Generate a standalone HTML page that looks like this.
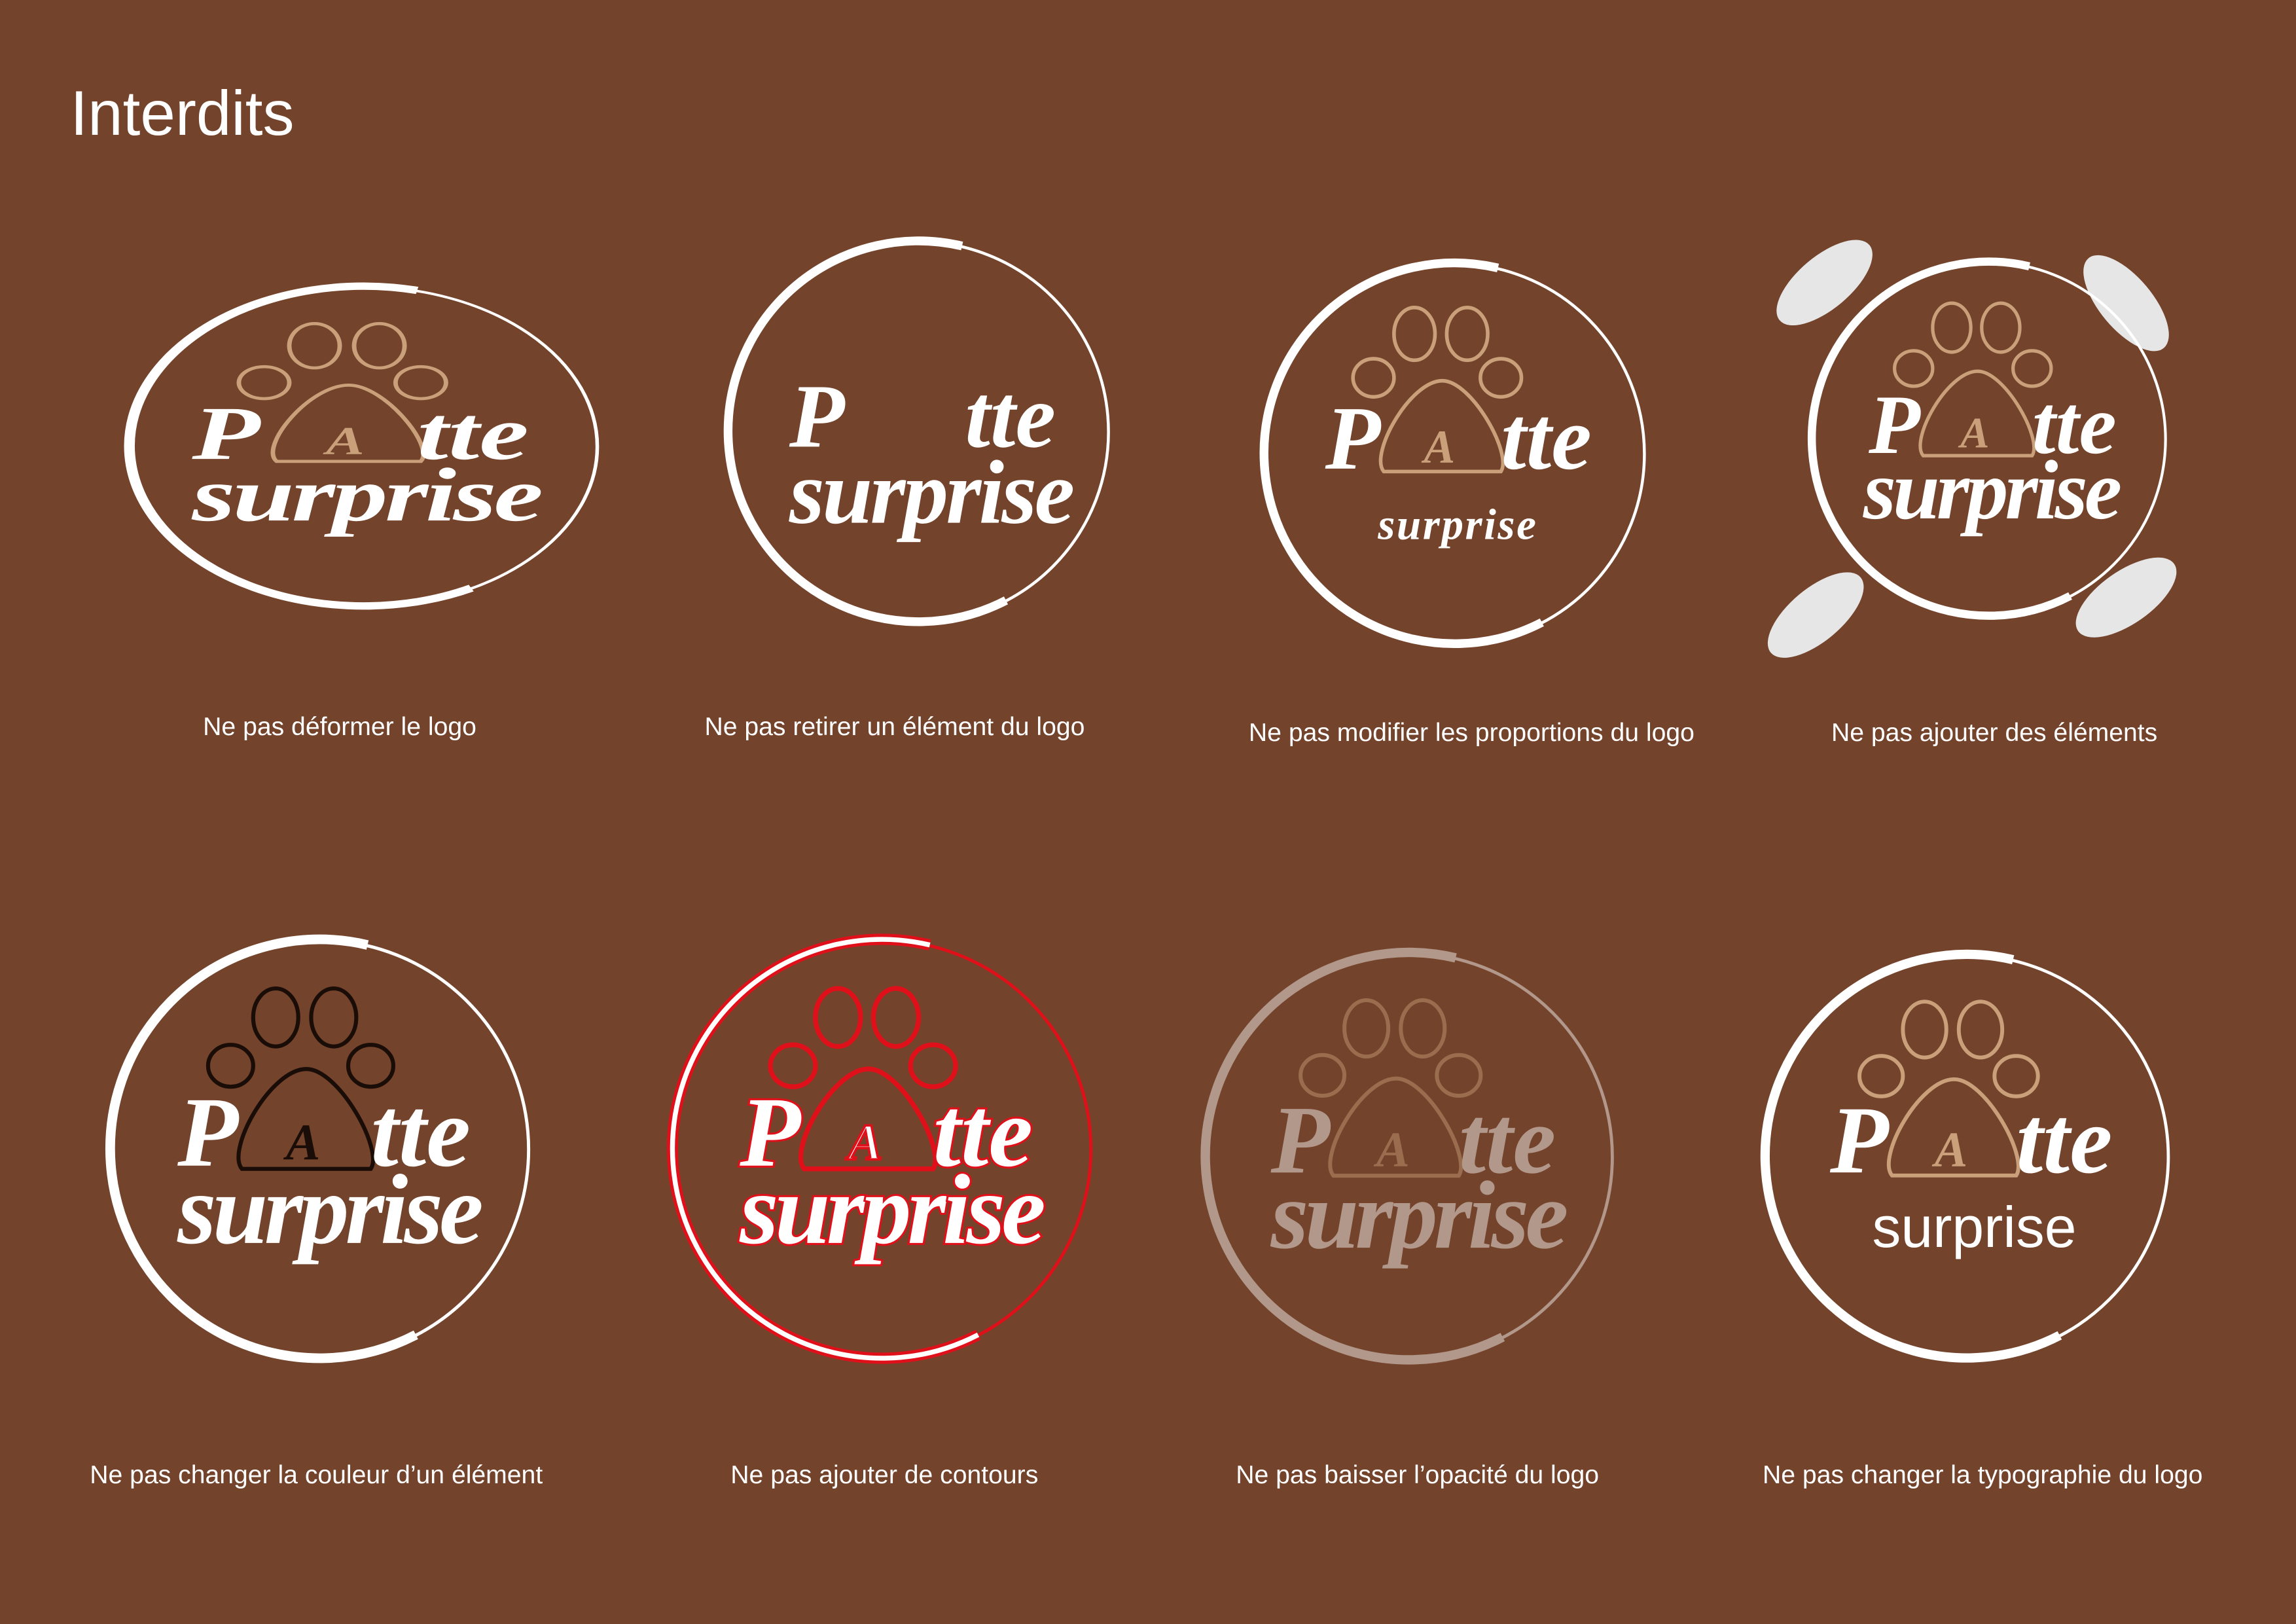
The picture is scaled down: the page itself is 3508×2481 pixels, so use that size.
<!DOCTYPE html>
<html><head><meta charset="utf-8"><style>
html,body{margin:0;padding:0;background:#74432b;}
svg{display:block}
.cap{font-family:"Liberation Sans",sans-serif;font-size:17.5px;fill:#fff;text-anchor:middle}
.lt{font-family:"Liberation Serif",serif;font-weight:bold;font-style:italic}
</style></head><body>
<svg width="3508" height="2481" viewBox="0 0 1568 1109" preserveAspectRatio="none" xmlns="http://www.w3.org/2000/svg">
<rect width="1568" height="1109" fill="#74432b"/>
<text x="48" y="92" font-family="Liberation Sans,sans-serif" font-size="43" fill="#fff">Interdits</text>

<!-- 1 deformed -->
<g transform="translate(248,305) scale(1.23,0.84)">
 <circle r="130" fill="none" stroke="#fff" stroke-width="2"/>
 <path d="M30,-127 A130 130 0 1 0 60,115" fill="none" stroke="#fff" stroke-width="6"/>
 <g fill="none" stroke="#c9a07a" stroke-width="2.5"><ellipse cx="-27" cy="-82" rx="14" ry="18"/><ellipse cx="9" cy="-82" rx="14" ry="18"/><ellipse cx="-55" cy="-52" rx="14" ry="13"/><ellipse cx="32" cy="-52" rx="14" ry="13"/><path d="M-8,-50 C-30,-50 -58,0 -48,12 L32,12 C40,0 12,-50 -8,-50 Z"/></g>
 <text x="-10" y="6" class="lt" font-size="32" fill="#c9a07a" text-anchor="middle">A</text>
 <text x="-95" y="10" class="lt" font-size="62" fill="#fff">P</text>
 <text x="30" y="10" class="lt" font-size="62" fill="#fff">tte</text>
 <text x="-95" y="60" class="lt" font-size="62" fill="#fff" textLength="195">surprise</text>
</g>

<!-- 2 removed -->
<g transform="translate(627,295)">
 <circle r="130" fill="none" stroke="#fff" stroke-width="2"/>
 <path d="M30,-127 A130 130 0 1 0 60,115" fill="none" stroke="#fff" stroke-width="6"/>
 <text x="-88" y="10" class="lt" font-size="62" fill="#fff">P</text>
 <text x="32" y="10" class="lt" font-size="62" fill="#fff">tte</text>
 <text x="-88" y="62" class="lt" font-size="62" fill="#fff" textLength="195">surprise</text>
</g>

<!-- 3 proportions -->
<g transform="translate(993,310)">
 <circle r="130" fill="none" stroke="#fff" stroke-width="2"/>
 <path d="M30,-127 A130 130 0 1 0 60,115" fill="none" stroke="#fff" stroke-width="6"/>
 <g fill="none" stroke="#c9a07a" stroke-width="2.5"><ellipse cx="-27" cy="-82" rx="14" ry="18"/><ellipse cx="9" cy="-82" rx="14" ry="18"/><ellipse cx="-55" cy="-52" rx="14" ry="13"/><ellipse cx="32" cy="-52" rx="14" ry="13"/><path d="M-8,-50 C-30,-50 -58,0 -48,12 L32,12 C40,0 12,-50 -8,-50 Z"/></g>
 <text x="-10" y="6" class="lt" font-size="32" fill="#c9a07a" text-anchor="middle">A</text>
 <text x="-88" y="10" class="lt" font-size="62" fill="#fff">P</text>
 <text x="32" y="10" class="lt" font-size="62" fill="#fff">tte</text>
 <text x="-52" y="58" class="lt" font-size="30" fill="#fff" textLength="108">surprise</text>
</g>

<!-- 4 added -->
<g fill="#e6e6e6">
 <ellipse cx="1246" cy="193" rx="40" ry="18" transform="rotate(-40 1246 193)"/>
 <ellipse cx="1452" cy="207" rx="40" ry="18" transform="rotate(50 1452 207)"/>
 <ellipse cx="1240" cy="420" rx="40" ry="18" transform="rotate(-40 1240 420)"/>
 <ellipse cx="1452" cy="408" rx="40" ry="18" transform="rotate(-35 1452 408)"/>
</g>
<g transform="translate(1358,300) scale(0.93)">
 <circle r="130" fill="none" stroke="#fff" stroke-width="2"/>
 <path d="M30,-127 A130 130 0 1 0 60,115" fill="none" stroke="#fff" stroke-width="6"/>
 <g fill="none" stroke="#c9a07a" stroke-width="2.5"><ellipse cx="-27" cy="-82" rx="14" ry="18"/><ellipse cx="9" cy="-82" rx="14" ry="18"/><ellipse cx="-55" cy="-52" rx="14" ry="13"/><ellipse cx="32" cy="-52" rx="14" ry="13"/><path d="M-8,-50 C-30,-50 -58,0 -48,12 L32,12 C40,0 12,-50 -8,-50 Z"/></g>
 <text x="-10" y="6" class="lt" font-size="32" fill="#c9a07a" text-anchor="middle">A</text>
 <text x="-88" y="10" class="lt" font-size="62" fill="#fff">P</text>
 <text x="32" y="10" class="lt" font-size="62" fill="#fff">tte</text>
 <text x="-92" y="58" class="lt" font-size="62" fill="#fff" textLength="190">surprise</text>
</g>

<!-- 5 color -->
<g transform="translate(218,785) scale(1.1)">
 <circle r="130" fill="none" stroke="#fff" stroke-width="2"/>
 <path d="M30,-127 A130 130 0 1 0 60,115" fill="none" stroke="#fff" stroke-width="6"/>
 <g fill="none" stroke="#1a0d08" stroke-width="2.5"><ellipse cx="-27" cy="-82" rx="14" ry="18"/><ellipse cx="9" cy="-82" rx="14" ry="18"/><ellipse cx="-55" cy="-52" rx="14" ry="13"/><ellipse cx="32" cy="-52" rx="14" ry="13"/><path d="M-8,-50 C-30,-50 -58,0 -48,12 L32,12 C40,0 12,-50 -8,-50 Z"/></g>
 <text x="-10" y="6" class="lt" font-size="32" fill="#1a0d08" text-anchor="middle">A</text>
 <text x="-88" y="10" class="lt" font-size="62" fill="#fff">P</text>
 <text x="32" y="10" class="lt" font-size="62" fill="#fff">tte</text>
 <text x="-88" y="58" class="lt" font-size="62" fill="#fff" textLength="190">surprise</text>
</g>

<!-- 6 outline -->
<g transform="translate(602,785) scale(1.1)">
 <circle r="130" fill="none" stroke="#e0101a" stroke-width="2"/>
 <path d="M30,-127 A130 130 0 1 0 60,115" fill="none" stroke="#e0101a" stroke-width="7"/>
 <path d="M30,-127 A130 130 0 1 0 60,115" fill="none" stroke="#fff" stroke-width="3"/>
 <g fill="none" stroke="#e0101a" stroke-width="3"><ellipse cx="-27" cy="-82" rx="14" ry="18"/><ellipse cx="9" cy="-82" rx="14" ry="18"/><ellipse cx="-55" cy="-52" rx="14" ry="13"/><ellipse cx="32" cy="-52" rx="14" ry="13"/><path d="M-8,-50 C-30,-50 -58,0 -48,12 L32,12 C40,0 12,-50 -8,-50 Z"/></g>
 <text x="-10" y="6" class="lt" font-size="32" fill="#fff" stroke="#e0101a" stroke-width="1.5" text-anchor="middle">A</text>
 <g stroke="#e0101a" stroke-width="2.5" paint-order="stroke">
 <text x="-88" y="10" class="lt" font-size="62" fill="#fff">P</text>
 <text x="32" y="10" class="lt" font-size="62" fill="#fff">tte</text>
 <text x="-88" y="58" class="lt" font-size="62" fill="#fff" textLength="190">surprise</text>
 </g>
</g>

<!-- 7 opacity -->
<g transform="translate(962,790) scale(1.07)" opacity="0.45">
 <circle r="130" fill="none" stroke="#fff" stroke-width="2"/>
 <path d="M30,-127 A130 130 0 1 0 60,115" fill="none" stroke="#fff" stroke-width="6"/>
 <g fill="none" stroke="#c9a07a" stroke-width="2.5"><ellipse cx="-27" cy="-82" rx="14" ry="18"/><ellipse cx="9" cy="-82" rx="14" ry="18"/><ellipse cx="-55" cy="-52" rx="14" ry="13"/><ellipse cx="32" cy="-52" rx="14" ry="13"/><path d="M-8,-50 C-30,-50 -58,0 -48,12 L32,12 C40,0 12,-50 -8,-50 Z"/></g>
 <text x="-10" y="6" class="lt" font-size="32" fill="#c9a07a" text-anchor="middle">A</text>
 <text x="-88" y="10" class="lt" font-size="62" fill="#fff">P</text>
 <text x="32" y="10" class="lt" font-size="62" fill="#fff">tte</text>
 <text x="-88" y="58" class="lt" font-size="62" fill="#fff" textLength="190">surprise</text>
</g>

<!-- 8 typography -->
<g transform="translate(1343,790) scale(1.06)">
 <circle r="130" fill="none" stroke="#fff" stroke-width="2"/>
 <path d="M30,-127 A130 130 0 1 0 60,115" fill="none" stroke="#fff" stroke-width="6"/>
 <g fill="none" stroke="#c9a07a" stroke-width="2.5"><ellipse cx="-27" cy="-82" rx="14" ry="18"/><ellipse cx="9" cy="-82" rx="14" ry="18"/><ellipse cx="-55" cy="-52" rx="14" ry="13"/><ellipse cx="32" cy="-52" rx="14" ry="13"/><path d="M-8,-50 C-30,-50 -58,0 -48,12 L32,12 C40,0 12,-50 -8,-50 Z"/></g>
 <text x="-10" y="6" class="lt" font-size="32" fill="#c9a07a" text-anchor="middle">A</text>
 <text x="-88" y="10" class="lt" font-size="62" fill="#fff">P</text>
 <text x="32" y="10" class="lt" font-size="62" fill="#fff">tte</text>
 <text x="5" y="58" font-family="Liberation Sans,sans-serif" font-size="37" fill="#fff" text-anchor="middle">surprise</text>
</g>

<text class="cap" x="232" y="502">Ne pas déformer le logo</text>
<text class="cap" x="611" y="502">Ne pas retirer un élément du logo</text>
<text class="cap" x="1005" y="506">Ne pas modifier les proportions du logo</text>
<text class="cap" x="1362" y="506">Ne pas ajouter des éléments</text>
<text class="cap" x="216" y="1013">Ne pas changer la couleur d’un élément</text>
<text class="cap" x="604" y="1013">Ne pas ajouter de contours</text>
<text class="cap" x="968" y="1013">Ne pas baisser l’opacité du logo</text>
<text class="cap" x="1354" y="1013">Ne pas changer la typographie du logo</text>
</svg>
</body></html>
